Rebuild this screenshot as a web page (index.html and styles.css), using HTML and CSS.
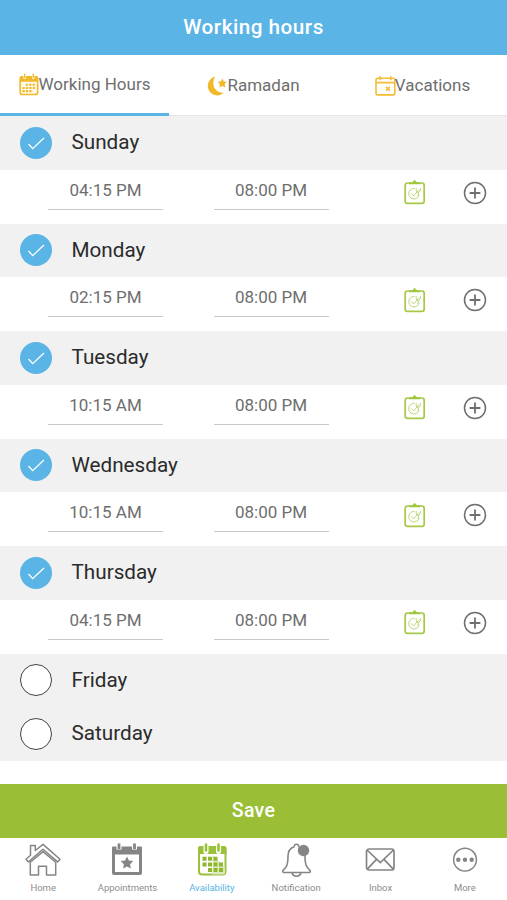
FILE: index.html
```html
<!DOCTYPE html>
<html lang="en">
<head>
<meta charset="utf-8">
<title>Working hours</title>
<link rel="stylesheet" href="styles.css">
</head>
<body>
<svg class="sprite" aria-hidden="true">
  <symbol id="check" viewBox="0 0 32 32"><path d="M8.500 17l4.200 4.600L24 11" fill="none" stroke="#fff" stroke-width="1.300"/></symbol>
  <symbol id="clip" viewBox="0 0 22 26">
    <rect x="1.200" y="4" width="19" height="20.400" rx="2.400" fill="none" stroke="#a5c945" stroke-width="1.700"/>
    <path d="M5 5.200V3.600h2.800Q9.200 3 10.600.8q1.400 2.200 2.800 2.800h2.800v1.600z" fill="#a0c53c"/>
    <path d="M10.600 9.400a5.300 5.300 0 1 0 4.600 6.500M7.200 14.400l2.400 2.500 5.400-6.200M12.200 9.200v2.600q.4 2 2.200 1.600 2.400-.6 2.100-4.400M14.800 13.400l-1 3.400" fill="none" stroke="#bcd778" stroke-width="1"/>
  </symbol>
  <symbol id="plus" viewBox="0 0 24 24"><g fill="none" stroke="#6e6e6e"><circle cx="12" cy="12" r="10.500" stroke-width="1.500"/><path d="M12 6.600v10.800M6.600 12h10.800" stroke-width="1.800"/></g></symbol>
</svg>

<header class="header">Working hours</header>

<nav class="tabs">
  <a class="tab active">
    <svg class="ico cal" viewBox="0 0 21 24"><rect x="1.200" y="4" width="18.400" height="18.500" rx="2.400" fill="#fffaf0" stroke="#f0b929" stroke-width="1.700"/><path d="M1 9V5q0-2 2-2h15q2 0 2 2v4z" fill="#f0b929"/><path d="M6 1v5M15 1v5" stroke="#fff" stroke-width="2.600"/><path d="M6 .6v4.600M15 .6v4.600" stroke="#f0b929" stroke-width="1.500"/><path d="M7 12.200h11M3.600 15.600h14.400M3.600 19h11" stroke="#f0b929" stroke-width="2.200" stroke-dasharray="2.400 1.200"/></svg><span>Working Hours</span>
  </a>
  <a class="tab ramadan">
    <svg class="ico moon" viewBox="0 0 20 20"><path d="M8.300.6A9.500 9.500 0 1 0 17 16.600Q11.500 17.200 8.600 13.600T6.400 6.300Q6.600 2.800 8.300.6z" fill="#f0b929"/><path d="M15.300 2.400l1.500 3 3.200.4-2.300 2.300.6 3.300-3-1.500-2.900 1.500.5-3.300L10.600 5.800l3.200-.4z" fill="#f0b929"/></svg><span>Ramadan</span>
  </a>
  <a class="tab vacations">
    <svg class="ico vac" viewBox="0 0 21 20"><g fill="none" stroke="#f3bd35" stroke-width="1.600"><rect x="1" y="2.300" width="18.800" height="16.600" rx="2"/><path d="M1 6.600h18.800M5 .3v4M15.800.3v4"/><path d="M11 10.800l3.800 3.800M14.800 10.800L11 14.600"/></g></svg><span>Vacations</span>
  </a>
</nav>

<main class="days">
  <section class="day"><h2 class="name"><svg class="mark on"><use href="#check"/></svg><span>Sunday</span></h2>
    <div class="hours"><span class="time">04:15 PM</span><span class="time">08:00 PM</span><svg class="clip"><use href="#clip"/></svg><svg class="plus"><use href="#plus"/></svg></div></section>
  <section class="day"><h2 class="name"><svg class="mark on"><use href="#check"/></svg><span>Monday</span></h2>
    <div class="hours"><span class="time">02:15 PM</span><span class="time">08:00 PM</span><svg class="clip"><use href="#clip"/></svg><svg class="plus"><use href="#plus"/></svg></div></section>
  <section class="day"><h2 class="name"><svg class="mark on"><use href="#check"/></svg><span>Tuesday</span></h2>
    <div class="hours"><span class="time">10:15 AM</span><span class="time">08:00 PM</span><svg class="clip"><use href="#clip"/></svg><svg class="plus"><use href="#plus"/></svg></div></section>
  <section class="day"><h2 class="name"><svg class="mark on"><use href="#check"/></svg><span>Wednesday</span></h2>
    <div class="hours"><span class="time">10:15 AM</span><span class="time">08:00 PM</span><svg class="clip"><use href="#clip"/></svg><svg class="plus"><use href="#plus"/></svg></div></section>
  <section class="day"><h2 class="name"><svg class="mark on"><use href="#check"/></svg><span>Thursday</span></h2>
    <div class="hours"><span class="time">04:15 PM</span><span class="time">08:00 PM</span><svg class="clip"><use href="#clip"/></svg><svg class="plus"><use href="#plus"/></svg></div></section>
  <section class="day off"><h2 class="name"><i class="mark"></i><span>Friday</span></h2></section>
  <section class="day off"><h2 class="name"><i class="mark"></i><span>Saturday</span></h2></section>
</main>

<button class="save">Save</button>

<footer class="nav">
  <a class="item"><svg viewBox="0 0 36 36"><g fill="none" stroke="#858585" stroke-width="1.500" stroke-linejoin="round"><path d="M5.500 3.500h4.800v5L18 2.400 35 17.200l-2.400 2.700L18 7.300 3.400 19.900 1 17.200l4.500-3.900z"/><path d="M5.300 20.300v12.700h8.200v-8.800h8V33h9.200V20.300L18 9.600z"/></g></svg><span>Home</span></a>
  <a class="item"><svg viewBox="0 0 36 36"><path d="M4 4.500h28q1 0 1 1V31q0 2-2 2H5q-2 0-2-2V5.500q0-1 1-1zM6 12.500v17.500h24V12.500z" fill="#858585" fill-rule="evenodd"/><path d="M10 1.500v6M25.500 1.500v6" stroke="#fff" stroke-width="5"/><path d="M10 1.500v5.500M25.500 1.500v5.500" stroke="#858585" stroke-width="2.800"/><path d="M18 14.500l1.900 4 4.300.6-3.100 3.100.7 4.400-3.800-2-3.900 2 .8-4.400-3.200-3.100 4.300-.6z" fill="#858585"/></svg><span>Appointments</span></a>
  <a class="item current"><svg viewBox="0 0 36 36"><rect x="5" y="5" width="26.500" height="27.500" rx="3" fill="#fff" stroke="#9bc03a" stroke-width="2"/><path d="M18.500 13L31 25v5.500q0 2-2 2H18.500z" fill="#dce8bd"/><path d="M4 12V6q0-2 2-2h24.500q2 0 2 2v6z" fill="#9bc03a"/><path d="M12 1v8.500M24.500 1v8.500" stroke="#fff" stroke-width="5" stroke-linecap="round"/><path d="M12 2.500v6M24.500 2.500v6" stroke="#9bc03a" stroke-width="2.600" stroke-linecap="round"/><path d="M8.500 16.800h15.500M8.500 22.500h21M14 28h15.500" stroke="#8fb82c" stroke-width="4" stroke-dasharray="4 1.500"/></svg><span>Availability</span></a>
  <a class="item"><svg viewBox="0 0 36 36"><g fill="none" stroke="#858585" stroke-width="1.600"><path d="M16.500 4.700q-.5-2.500 2-2.500t2 2.500M16.500 4.700Q10 6.500 10 14q0 8-2 11-1.300 1.800-3 3.300-.8 2 1 2.200h25q1.800-.2 1-2.200-1.700-1.500-3-3.300-2-3-2-11Q27 7 20.500 4.700"/><path d="M14 31q1 3.200 4.500 3.200T23 31"/></g><circle cx="25.500" cy="8.500" r="5.700" fill="#858585"/></svg><span>Notification</span></a>
  <a class="item"><svg viewBox="0 0 36 36"><g fill="none" stroke="#858585" stroke-width="1.700"><rect x="4.500" y="7" width="27.500" height="21" rx="2.500"/><path d="M5 8l13.300 12.500L31.500 8M5 27.300l9.500-10M31.500 27.300l-9.500-10"/></g></svg><span>Inbox</span></a>
  <a class="item"><svg viewBox="0 0 36 36"><circle cx="18" cy="17.700" r="11.400" fill="none" stroke="#858585" stroke-width="1.500"/><g fill="#858585"><circle cx="11.300" cy="17.700" r="2.200"/><circle cx="18" cy="17.700" r="2.200"/><circle cx="24.700" cy="17.700" r="2.200"/></g></svg><span>More</span></a>
</footer>
</body>
</html>
```
FILE: styles.css
```css
* { box-sizing: border-box; }
body {
  margin: 0;
  width: 507px;
  height: 900px;
  display: flex;
  flex-direction: column;
  overflow: hidden;
  background: #fff;
  font-family: Roboto, "Liberation Sans", sans-serif;
  color: #6e6e6e;
}
svg { display: block; flex: none; }
.sprite { width: 0; height: 0; position: absolute; }

.header {
  height: 54.5px;
  flex: none;
  background: #5ab4e5;
  color: #fff;
  font-size: 20.7px;
  font-weight: 500;
  letter-spacing: 0.5px;
  line-height: 54px;
  text-align: center;
}

.tabs {
  height: 61.5px;
  flex: none;
  display: grid;
  grid-template-columns: repeat(3, 1fr);
  border-bottom: 1px solid #e6e6e6;
}
.tab {
  display: flex;
  align-items: center;
  justify-content: center;
  font-size: 17px;
  padding-top: 1px;
}
.tab.active { border-bottom: 3px solid #5ab4e5; margin-bottom: -1px; }
.tab.vacations span { margin-left: -1px; }
.cal { width: 20px; height: 23px; margin-top: 1px; }
.moon { width: 20px; height: 20px; margin-top: 1px; }
.vac { width: 21px; height: 20px; margin-top: 2px; }

.days { flex: none; }
.day { height: 107.5px; }
.day.off { height: 53.75px; }
.name {
  height: 53.75px;
  margin: 0;
  padding-left: 20px;
  display: flex;
  align-items: center;
  background: #f1f1f1;
  color: #2b2b2b;
  font-size: 20.7px;
  font-weight: 400;
}
.name span { padding-bottom: 1.5px; }
.mark {
  width: 32px;
  height: 32px;
  flex: none;
  margin-right: 19.5px;
  border: 1.5px solid #444;
  border-radius: 50%;
  background: #fff;
}
.mark.on { border: 0; background: #5ab4e5; }
.hours {
  height: 53.75px;
  padding: 0 20px 0 48px;
  display: flex;
  align-items: flex-start;
}
.time {
  width: 115px;
  height: 40px;
  margin-right: 50.5px;
  border-bottom: 1px solid #c9c9c9;
  font-size: 17px;
  line-height: 41.5px;
  text-align: center;
}
.clip { width: 22px; height: 26px; margin: 9.500px 0 0 24.500px; }
.plus { width: 24px; height: 24px; margin: 11.200px 0 0 auto; }

.save {
  height: 54px;
  flex: none;
  margin: 22.5px 0 0;
  padding: 0;
  border: 0;
  background: #9abf36;
  color: #fff;
  font: 500 19.5px/54px Roboto, "Liberation Sans", sans-serif;
  letter-spacing: 0.3px;
}

.nav {
  flex: 1;
  display: grid;
  grid-template-columns: repeat(6, 1fr);
  padding-left: 1px;
  font-size: 9.5px;
  color: #8c8c8c;
}
.item {
  display: flex;
  flex-direction: column;
  align-items: center;
  padding-top: 4px;
}
.item svg { width: 36px; height: 36px; }
.item span { margin-top: 4px; line-height: 12px; }
.current { color: #5ab4e5; }
```
